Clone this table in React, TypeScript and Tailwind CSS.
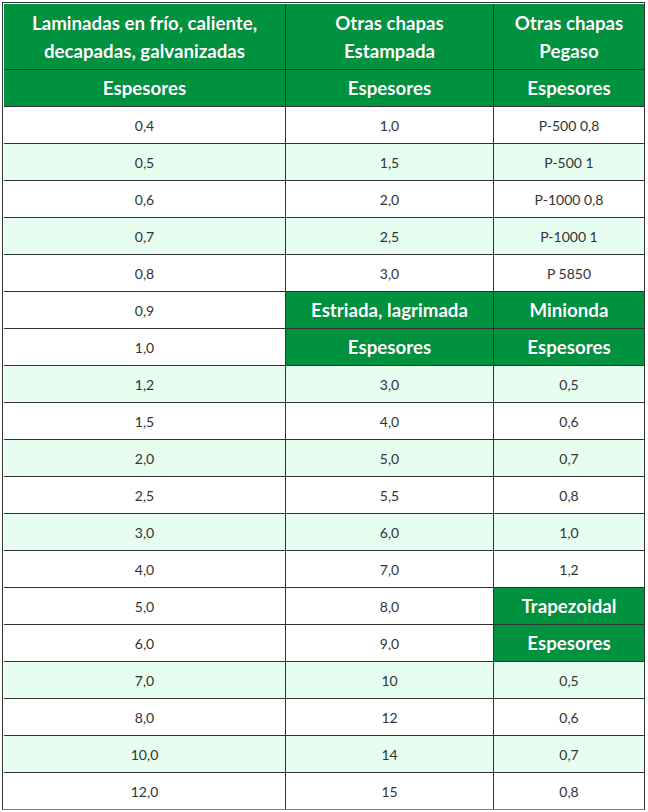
import React from "react";

type Cell = { t: string; h?: boolean };
type Row = { bg: "w" | "g"; cells: Cell[] };

const H = (t: string): Cell => ({ t, h: true });
const D = (t: string): Cell => ({ t });

const rows: Row[] = [
  { bg: "w", cells: [H("Laminadas en frío, caliente,\ndecapadas, galvanizadas"), H("Otras chapas\nEstampada"), H("Otras chapas\nPegaso")] },
  { bg: "w", cells: [H("Espesores"), H("Espesores"), H("Espesores")] },
  { bg: "w", cells: [D("0,4"), D("1,0"), D("P-500 0,8")] },
  { bg: "g", cells: [D("0,5"), D("1,5"), D("P-500 1")] },
  { bg: "w", cells: [D("0,6"), D("2,0"), D("P-1000 0,8")] },
  { bg: "g", cells: [D("0,7"), D("2,5"), D("P-1000 1")] },
  { bg: "w", cells: [D("0,8"), D("3,0"), D("P 5850")] },
  { bg: "w", cells: [D("0,9"), H("Estriada, lagrimada"), H("Minionda")] },
  { bg: "w", cells: [D("1,0"), H("Espesores"), H("Espesores")] },
  { bg: "g", cells: [D("1,2"), D("3,0"), D("0,5")] },
  { bg: "w", cells: [D("1,5"), D("4,0"), D("0,6")] },
  { bg: "g", cells: [D("2,0"), D("5,0"), D("0,7")] },
  { bg: "w", cells: [D("2,5"), D("5,5"), D("0,8")] },
  { bg: "g", cells: [D("3,0"), D("6,0"), D("1,0")] },
  { bg: "w", cells: [D("4,0"), D("7,0"), D("1,2")] },
  { bg: "w", cells: [D("5,0"), D("8,0"), H("Trapezoidal")] },
  { bg: "w", cells: [D("6,0"), D("9,0"), H("Espesores")] },
  { bg: "g", cells: [D("7,0"), D("10"), D("0,5")] },
  { bg: "w", cells: [D("8,0"), D("12"), D("0,6")] },
  { bg: "g", cells: [D("10,0"), D("14"), D("0,7")] },
  { bg: "w", cells: [D("12,0"), D("15"), D("0,8")] },
];

export default function App() {
  return (
    <div className="w-[648px] h-[812px] bg-white" style={{ fontFamily: "Lato, 'Noto Sans', sans-serif" }}>
      <div className="ml-[2px] mt-[2px] inline-block border border-[#333333] border-b-[#808080] bg-white pl-px pt-px">
        <div className="grid grid-cols-[281px_207px_150px] grid-rows-[65px_repeat(20,36px)] gap-px bg-[#333333]">
          {rows.map((r, ri) =>
            r.cells.map((c, ci) =>
              c.h ? (
                <div
                  key={`${ri}-${ci}`}
                  className="flex items-center justify-center whitespace-pre-line bg-[#00923f] text-center text-[18.7px] font-bold leading-[28px] text-white [text-shadow:0_0_1px_rgba(0,0,0,0.25)]"
                >
                  {c.t}
                </div>
              ) : (
                <div
                  key={`${ri}-${ci}`}
                  className={`flex items-center justify-center text-center text-[14px] text-[#333333] ${
                    r.bg === "g" ? "bg-[#e6fdef]" : "bg-white"
                  }`}
                >
                  {c.t}
                </div>
              )
            )
          )}
        </div>
      </div>
    </div>
  );
}
